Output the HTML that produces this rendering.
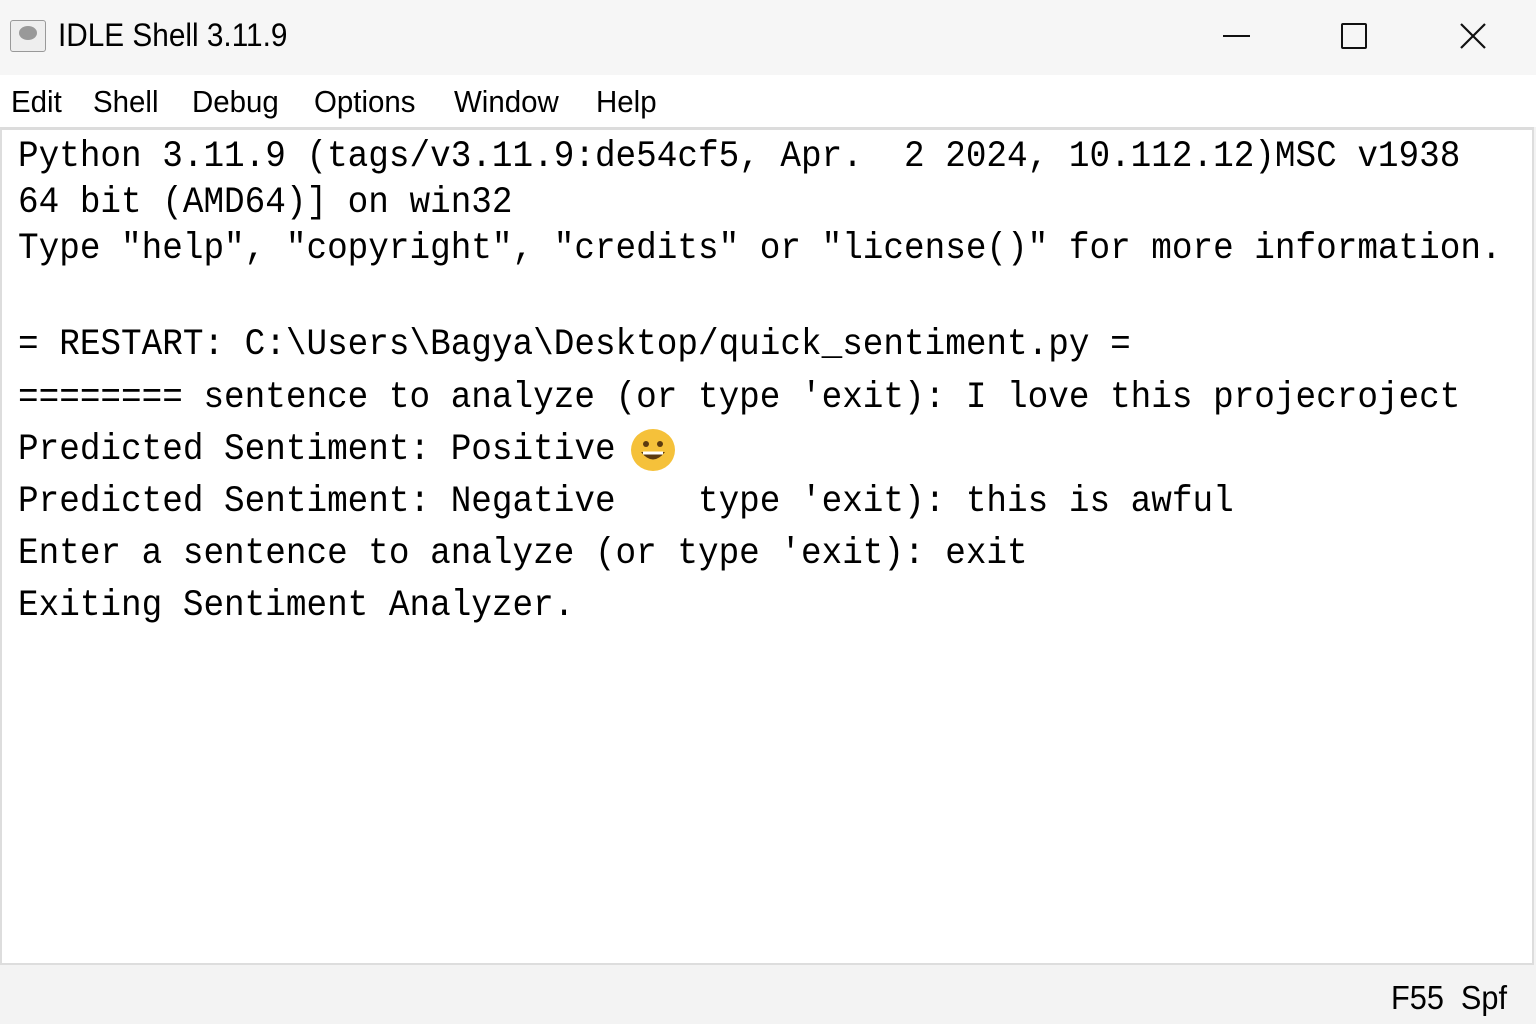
<!DOCTYPE html>
<html><head><meta charset="utf-8"><style>
body{margin:0;width:1536px;height:1024px;position:relative;overflow:hidden;background:#f3f3f3;font-family:"Liberation Sans",sans-serif}
.t{position:absolute;white-space:pre;color:#000}
.m{font-family:"Liberation Mono","DejaVu Sans Mono",monospace;font-size:37px;letter-spacing:0;line-height:40px;left:18px;transform:scaleX(0.928);transform-origin:0 0}
.menu span{position:absolute;top:84px;font-size:31px;transform:scaleX(0.95);transform-origin:0 0}
</style></head><body>
<div style="position:absolute;left:0;top:0;width:1536px;height:75px;background:#f6f6f6"></div>
<div style="position:absolute;left:10px;top:20px;width:34px;height:30px;border:1px solid #999;border-radius:3px;background:#eee"></div>
<div style="position:absolute;left:19px;top:26px;width:18px;height:14px;border-radius:50%;background:#999"></div>
<div class="t" style="left:58px;top:17px;font-size:32px;transform:scaleX(0.93);transform-origin:0 0">IDLE Shell 3.11.9</div>
<div style="position:absolute;left:1223px;top:35px;width:27px;height:2px;background:#111"></div>
<div style="position:absolute;left:1341px;top:23px;width:22px;height:22px;border:2px solid #111;border-radius:2px"></div>
<svg style="position:absolute;left:1459px;top:22px" width="28" height="28"><path d="M2 2L26 26M26 2L2 26" stroke="#111" stroke-width="2.2"/></svg>
<div style="position:absolute;left:0;top:75px;width:1536px;height:52px;background:#fff"></div>
<div class="menu">
<span style="left:11px">Edit</span><span style="left:93px">Shell</span><span style="left:192px">Debug</span><span style="left:314px">Options</span><span style="left:454px">Window</span><span style="left:596px">Help</span>
</div>
<div style="position:absolute;left:0;top:127px;width:1534px;height:838px;background:#fff;border:2px solid #ddd;border-top:3px solid #dcdcdc;box-sizing:border-box"></div>
<div class="t m" style="top:137px">Python 3.11.9 (tags/v3.11.9:de54cf5, Apr.  2 2024, 10.112.12)MSC v1938</div>
<div class="t m" style="top:183px">64 bit (AMD64)] on win32</div>
<div class="t m" style="top:229px">Type "help", "copyright", "credits" or "license()" for more information.</div>
<div class="t m" style="top:325px">= RESTART: C:\Users\Bagya\Desktop/quick_sentiment.py =</div>
<div class="t m" style="top:378px">======== sentence to analyze (or type 'exit): I love this projecroject</div>
<div class="t m" style="top:430px">Predicted Sentiment: Positive</div>
<div style="position:absolute;left:631px;top:429px;width:44px;height:42px;border-radius:50%;background:#f5c13a"></div>
<svg style="position:absolute;left:631px;top:429px" width="44" height="42"><circle cx="15" cy="15" r="3" fill="#5a3a10"/><circle cx="29" cy="15" r="3" fill="#5a3a10"/><path d="M10 23Q22 38 34 23Z" fill="#5a3a10"/><path d="M12 24H32" stroke="#fff" stroke-width="3"/></svg>
<div class="t m" style="top:482px">Predicted Sentiment: Negative    type 'exit): this is awful</div>
<div class="t m" style="top:534px">Enter a sentence to analyze (or type 'exit): exit</div>
<div class="t m" style="top:586px">Exiting Sentiment Analyzer.</div>
<div class="t" style="left:1391px;top:979px;font-size:33px;transform:scaleX(0.93);transform-origin:0 0">F55  Spf</div>
</body></html>
